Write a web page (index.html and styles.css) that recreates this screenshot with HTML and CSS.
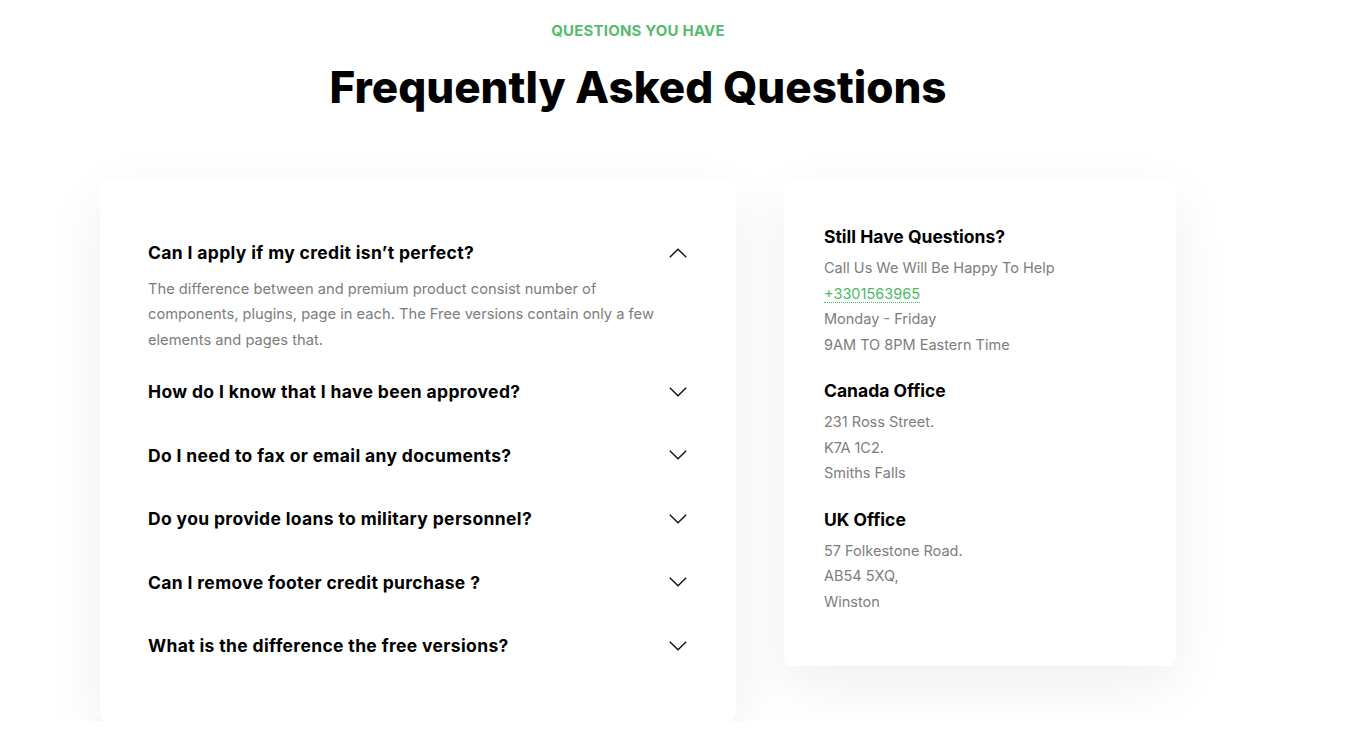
FILE: index.html
```html
<!DOCTYPE html>
<html lang="en">
<head>
<meta charset="utf-8">
<title>Frequently Asked Questions</title>
<link rel="stylesheet" href="styles.css">
</head>
<body>
<section class="faq">
  <header class="faq-head">
    <p class="eyebrow">QUESTIONS YOU HAVE</p>
    <h1 class="title">Frequently Asked Questions</h1>
  </header>
  <div class="faq-grid">
    <div class="card accordion">
      <div class="item open">
        <div class="q">
          <span>Can I apply if my credit isn’t perfect?</span>
          <svg class="chev" viewBox="0 0 18 10" width="18" height="10"><path d="M0.8 9.2 L9 1.2 L17.2 9.2" fill="none" stroke="#111" stroke-width="1.4"/></svg>
        </div>
        <p class="a">The difference between and premium product consist number of components, plugins, page in each. The Free versions contain only a few elements and pages that.</p>
      </div>
      <div class="item">
        <div class="q">
          <span>How do I know that I have been approved?</span>
          <svg class="chev" viewBox="0 0 18 10" width="18" height="10"><path d="M0.8 0.8 L9 8.8 L17.2 0.8" fill="none" stroke="#111" stroke-width="1.4"/></svg>
        </div>
      </div>
      <div class="item">
        <div class="q">
          <span>Do I need to fax or email any documents?</span>
          <svg class="chev" viewBox="0 0 18 10" width="18" height="10"><path d="M0.8 0.8 L9 8.8 L17.2 0.8" fill="none" stroke="#111" stroke-width="1.4"/></svg>
        </div>
      </div>
      <div class="item">
        <div class="q">
          <span>Do you provide loans to military personnel?</span>
          <svg class="chev" viewBox="0 0 18 10" width="18" height="10"><path d="M0.8 0.8 L9 8.8 L17.2 0.8" fill="none" stroke="#111" stroke-width="1.4"/></svg>
        </div>
      </div>
      <div class="item">
        <div class="q">
          <span>Can I remove footer credit purchase ?</span>
          <svg class="chev" viewBox="0 0 18 10" width="18" height="10"><path d="M0.8 0.8 L9 8.8 L17.2 0.8" fill="none" stroke="#111" stroke-width="1.4"/></svg>
        </div>
      </div>
      <div class="item">
        <div class="q">
          <span>What is the difference the free versions?</span>
          <svg class="chev" viewBox="0 0 18 10" width="18" height="10"><path d="M0.8 0.8 L9 8.8 L17.2 0.8" fill="none" stroke="#111" stroke-width="1.4"/></svg>
        </div>
      </div>
    </div>
    <aside class="card contact">
      <div class="group">
        <h3>Still Have Questions?</h3>
        <p>Call Us We Will Be Happy To Help</p>
        <p><a class="phone" href="#">+3301563965</a></p>
        <p>Monday - Friday</p>
        <p>9AM TO 8PM Eastern Time</p>
      </div>
      <div class="group">
        <h3>Canada Office</h3>
        <p>231 Ross Street.</p>
        <p>K7A 1C2.</p>
        <p>Smiths Falls</p>
      </div>
      <div class="group">
        <h3>UK Office</h3>
        <p>57 Folkestone Road.</p>
        <p>AB54 5XQ,</p>
        <p>Winston</p>
      </div>
    </aside>
  </div>
</section>
</body>
</html>
```

FILE: styles.css
```css
* { box-sizing: border-box; }
html, body { margin: 0; padding: 0; background: #fff; }
body {
  font-family: Inter, "Noto Sans", Roboto, sans-serif;
  color: #0b0b0b;
  overflow: hidden;
}
.faq {
  width: 1276px;
  padding: 0 100px;
}
.faq-head {
  text-align: center;
  padding-top: 22px;
}
.eyebrow {
  margin: 0;
  font-size: 15px;
  line-height: 18px;
  font-weight: 700;
  color: #56bb6d;
  letter-spacing: 0.2px;
}
.title {
  margin: 21px 0 0;
  font-size: 44px;
  line-height: 52px;
  font-weight: 800;
  letter-spacing: 0;
  color: #000;
}
.faq-grid {
  display: grid;
  grid-template-columns: 636px 392px;
  gap: 48px;
  margin-top: 67px;
  align-items: start;
}
.card {
  background: #fff;
  border-radius: 8px;
  box-shadow: 0 18px 60px rgba(0, 0, 0, 0.065);
}
.accordion {
  padding: 42px 48px 43px;
}
.item {
  padding: 18px 0;
}
.item.open {
  padding: 17px 0 7px;
}
.q {
  display: flex;
  align-items: center;
  justify-content: space-between;
  font-size: 17.5px;
  line-height: 27.5px;
  font-weight: 700;
  color: #000;
  letter-spacing: 0.35px;
}
.chev {
  display: block;
  margin-right: 1px;
}
.a {
  margin: 10px 0 0;
  font-size: 14.7px;
  line-height: 25.5px;
  color: #7d7d7d;
  padding-right: 20px;
}
.contact {
  padding: 44px 40px 31px;
}
.group {
  margin-bottom: 21px;
}
.group h3 {
  margin: 0 0 5px;
  font-size: 17.5px;
  line-height: 26px;
  font-weight: 700;
  color: #000;
}
.group p {
  margin: 0;
  font-size: 14.5px;
  line-height: 25.5px;
  color: #7d7d7d;
}
.phone {
  color: #4fb866;
  text-decoration: none;
  border-bottom: 1px dotted #4fb866;
}
```
